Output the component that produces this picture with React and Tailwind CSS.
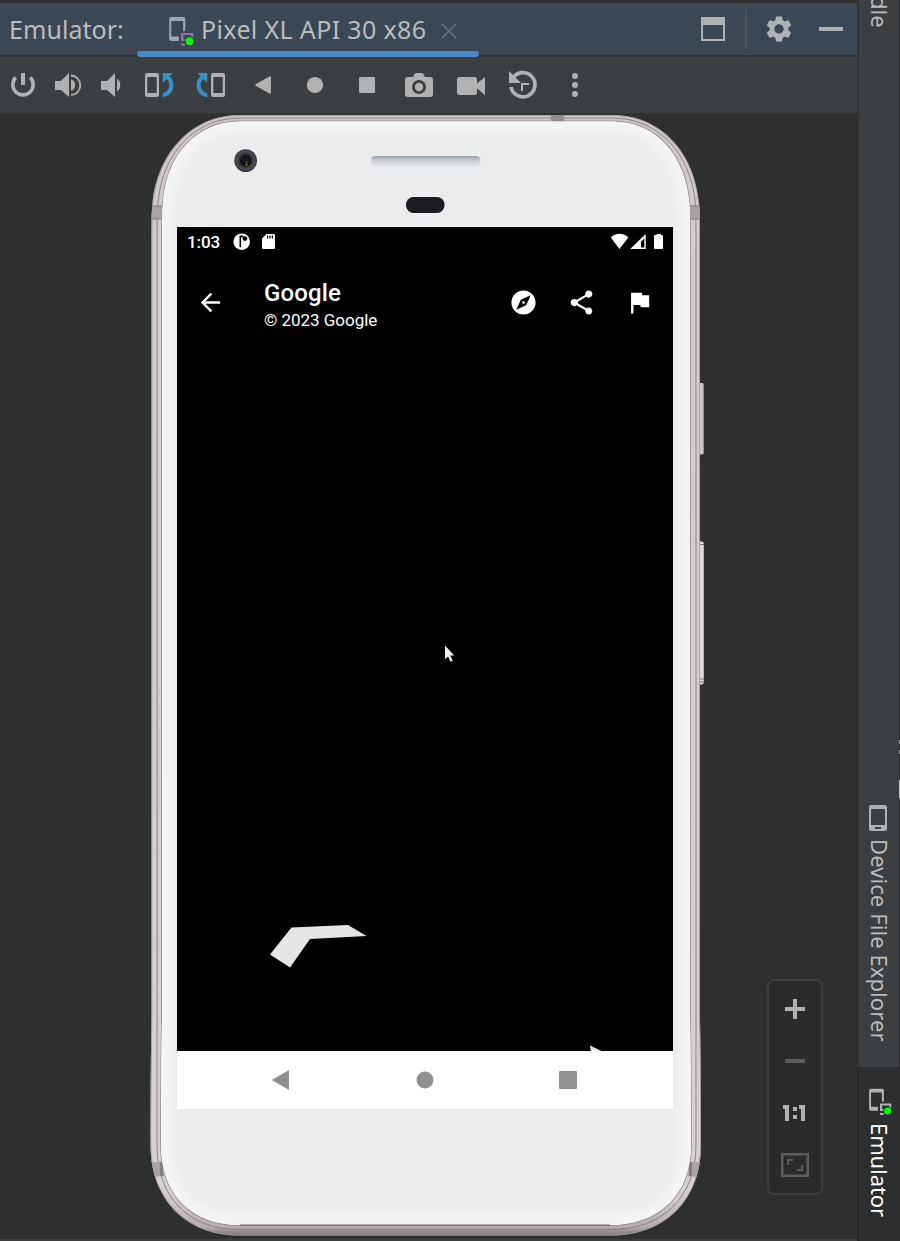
import React from "react";

const BLUE = "#3592c4";

/* An icon whose view box is given in window coordinates. */
function Glyph({ box, children, className = "" }) {
  const [, , w, h] = box.split(" ");
  return (
    <svg viewBox={box} width={w} height={h} className={`block shrink-0 ${className}`}>
      {children}
    </svg>
  );
}

function Material({ d }) {
  return (
    <svg viewBox="0 0 24 24" width="29" height="29" fill="#fff" className="block shrink-0">
      <path d={d} />
    </svg>
  );
}

function EmulatorIcon({ device = "#afb1b3", second = "#afb1b3", scale = 1 }) {
  return (
    <svg viewBox="0 0 28 32" width={28 * scale} height={32 * scale} className="block shrink-0">
      <path
        fillRule="evenodd"
        fill={device}
        d="M3 3h12.500a1.800 1.800 0 0 1 1.800 1.800V17h-2.200V7H3.300v15.500h7.500V27H3a1.800 1.800 0 0 1-1.800-1.800V4.800A1.800 1.800 0 0 1 3 3z"
      />
      <path fill="none" stroke={second} strokeWidth="2.200" d="M14.200 27V20h10v8M13 26h8M13 30.500h4" />
      <circle cx="21.500" cy="27.200" r="5" fill="#26372c" />
      <circle cx="21.500" cy="27.200" r="3.900" fill="#00ff00" />
    </svg>
  );
}

function Header() {
  return (
    <div className="flex h-[52px] shrink-0 bg-[#3c4755] text-[#bbbbbb]">
      <div className="w-[137px] pl-[9px] pt-[6px] text-[25px] leading-[40px] tracking-[0.05px]">Emulator:</div>
      <div className="relative flex w-[342px] pl-[31px]">
        <div className="pt-[11px]">
          <EmulatorIcon device="#9aa7b0" second="#8f73b5" />
        </div>
        <div className="w-[244px] pl-[5px] pt-[6px] text-[25px] leading-[40px] tracking-[0.36px] whitespace-nowrap">
          Pixel XL API 30 x86
        </div>
        <Glyph box="440 3 18 52">
          <path d="M441.500 23.500l15 15M456.500 23.500l-15 15" stroke="#65707c" strokeWidth="1.600" />
        </Glyph>
        <div className="absolute left-0 top-[48px] z-10 h-[6px] w-[342px] rounded-full bg-[#4a88c7]" />
      </div>
      <div className="flex flex-1 justify-end">
        <Glyph box="700 3 26 52">
          <path fillRule="evenodd" fill="#afb1b3" d="M701 17h24v24h-24zM703 25v14h20V25z" />
        </Glyph>
        <div className="ml-[19px] mt-[6px] h-[40px] w-[2px] bg-[#515457]" />
        <Glyph box="747 3 110 52">
          <g fill="#afb1b3">
            <path
              fillRule="evenodd"
              transform="translate(763.400 13.400) scale(1.300)"
              d="M19.140 12.940c.040-.3.060-.61.060-.94s-.020-.64-.070-.94l2.030-1.580a.49.49 0 0 0 .120-.61l-1.920-3.320a.49.49 0 0 0-.59-.22l-2.390.96a7 7 0 0 0-1.620-.94L14.400 2.810a.48.480 0 0 0-.48-.41h-3.840a.47.470 0 0 0-.47.410L9.250 5.350c-.59.240-1.130.57-1.620.94l-2.390-.96a.47.470 0 0 0-.59.220L2.740 8.870a.48.480 0 0 0 .120.610l2.030 1.580c-.050.3-.090.630-.090.940s.020.640.070.940l-2.030 1.580a.49.490 0 0 0-.120.610l1.920 3.320c.120.220.370.290.590.220l2.390-.96c.5.380 1.030.7 1.620.94l.36 2.540c.050.240.240.410.480.410h3.840c.24 0 .44-.17.470-.41l.36-2.540c.59-.24 1.130-.56 1.620-.94l2.390.96c.22.080.470 0 .59-.22l1.920-3.320a.47.470 0 0 0-.12-.61zM12 15.600a3.600 3.600 0 1 1 0-7.200 3.600 3.600 0 0 1 0 7.200z"
            />
            <path d="M819 27h24v4h-24z" />
          </g>
        </Glyph>
      </div>
    </div>
  );
}

function RotateShape() {
  return (
    <g>
      <path
        fillRule="evenodd"
        fill="#afb1b3"
        d="M147 73h10a2 2 0 0 1 2 2v20a2 2 0 0 1-2 2h-10a2 2 0 0 1-2-2V75a2 2 0 0 1 2-2zM147.300 77v16h9.400V77z"
      />
      <path fill={BLUE} d="M162.700 73h10l-3.300 3.300c2.600 2.200 4 5.300 4 8.900 0 6.400-4.300 11.400-10.700 11.800v-4c4-.4 6.600-3.800 6.600-7.800 0-2.400-.9-4.500-2.600-6.100L162.700 83z" />
    </g>
  );
}

function Toolbar() {
  return (
    <div className="flex h-[56px] shrink-0 bg-[#3c3f41] text-[#afb1b3]">
      <Glyph box="0 57 46 56">
        <path d="M15.700 77.600a10.200 10.200 0 1 0 14.600 0" fill="none" stroke="currentColor" strokeWidth="3.600" />
        <path d="M21 73h4v12h-4z" fill="currentColor" />
      </Glyph>
      <Glyph box="46 57 44 56">
        <g fill="currentColor">
          <path d="M55 81h6l8-8v24l-8-7h-6z" />
          <path d="M71 79.500a5 5.700 0 0 1 0 11.200z" />
          <path d="M71 75.500a9.300 9.700 0 0 1 0 19.400" fill="none" stroke="currentColor" strokeWidth="1.800" />
        </g>
      </Glyph>
      <Glyph box="90 57 43 56">
        <g fill="currentColor">
          <path d="M101 81h6l8-8v24l-8-7h-6z" />
          <path d="M117 79a4.300 6.200 0 0 1 0 12z" />
        </g>
      </Glyph>
      <Glyph box="133 57 52 56">
        <RotateShape />
      </Glyph>
      <Glyph box="185 57 52 56">
        <g transform="translate(370 0) scale(-1 1)">
          <RotateShape />
        </g>
      </Glyph>
      <Glyph box="237 57 52 56">
        <path d="M256 85l14.200-8v16z" fill="currentColor" stroke="currentColor" strokeWidth="1.500" strokeLinejoin="round" />
      </Glyph>
      <Glyph box="289 57 52 56">
        <circle cx="315" cy="85" r="8.100" fill="currentColor" />
      </Glyph>
      <Glyph box="341 57 52 56">
        <rect x="359" y="77" width="16" height="16" rx="1.200" fill="currentColor" />
      </Glyph>
      <Glyph box="393 57 52 56">
        <path fill="currentColor" d="M408 77h5l1.600-3a2 2 0 0 1 1.800-1h5.200a2 2 0 0 1 1.800 1l1.600 3h5a3 3 0 0 1 3 3v14a3 3 0 0 1-3 3h-22a3 3 0 0 1-3-3V80a3 3 0 0 1 3-3z" />
        <circle cx="419" cy="87" r="5.600" fill="none" stroke="#3c3f41" strokeWidth="2.800" />
      </Glyph>
      <Glyph box="445 57 52 56">
        <path fill="currentColor" d="M459.500 77h15a2.500 2.500 0 0 1 2.500 2.500v4L485 77v18l-8-6.500v4a2.500 2.500 0 0 1-2.500 2.500h-15a2.500 2.500 0 0 1-2.500-2.500v-13a2.500 2.500 0 0 1 2.500-2.500z" />
      </Glyph>
      <Glyph box="497 57 52 56">
        <path d="M511 87a12.100 12.100 0 1 0 2.600-10" fill="none" stroke="currentColor" strokeWidth="3.700" />
        <path d="M509 71v12h12z" fill="currentColor" />
        <path d="M522 91v-7h7" fill="none" stroke="currentColor" strokeWidth="2" />
      </Glyph>
      <Glyph box="549 57 52 56">
        <g fill="currentColor">
          <circle cx="575" cy="76" r="3" />
          <circle cx="575" cy="85" r="3" />
          <circle cx="575" cy="94" r="3" />
        </g>
      </Glyph>
    </div>
  );
}

const SHELL =
  "M240 115H612C661 115 694 152 699 203C700 213 700 223 700 240V1020C701 1070 701 1110 701 1145C701 1200 665 1235.500 612 1235.500H238C187 1235.500 150.500 1200 150.500 1145C150.500 1110 150.500 1070 151.500 1020V240C151.500 223 151.500 213 152.500 203C158 152 192 115 240 115Z";
const FACE =
  "M240 121.500H612C657 121.500 686 156 689.500 205C690 220 690 240 690 260V1020C691 1070 691 1110 691 1145C691 1195 659 1225 610 1225H240C192 1225 161 1195 161 1145C161 1110 161 1070 162 1020V240C162 223 162 214 163 203C166 156 196 121.500 240 121.500Z";
const GROOVE =
  "M240 118H612C659 118 691 154 695.500 204C696 220 696 240 696 260V1020C696 1070 696 1110 696 1145C696 1198 662 1229.500 611 1229.500H239C189 1229.500 157 1198 157 1145C157 1110 157 1070 157 1020V240C157 223 157 214 158 203C162 154 194 118 240 118Z";

function DeviceShell() {
  return (
    <svg viewBox="140 115 580 1123" width="580" height="1123" className="absolute left-[140px] top-0">
      <defs>
        <clipPath id="shellClip">
          <path d={SHELL} />
        </clipPath>
        <clipPath id="faceClip">
          <path d={FACE} />
        </clipPath>
        <filter id="soft" x="-10%" y="-10%" width="120%" height="120%">
          <feGaussianBlur stdDeviation="4" />
        </filter>
        <linearGradient id="rim" x1="0" y1="0" x2="0" y2="1">
          <stop offset="0" stopColor="#cdc5c8" />
          <stop offset="0.1" stopColor="#d3cccf" />
          <stop offset="0.96" stopColor="#d8d1d4" />
          <stop offset="0.992" stopColor="#b7adb1" />
          <stop offset="1" stopColor="#7d7478" />
        </linearGradient>
        <linearGradient id="speaker" x1="0" y1="0" x2="0" y2="1">
          <stop offset="0" stopColor="#9aa0aa" />
          <stop offset="0.3" stopColor="#bcc2c9" />
          <stop offset="0.5" stopColor="#d3d7db" />
          <stop offset="0.85" stopColor="#dee0e3" />
          <stop offset="1" stopColor="#e6e7e9" />
        </linearGradient>
        <radialGradient id="lens">
          <stop offset="0" stopColor="#0a0a0c" />
          <stop offset="0.45" stopColor="#141518" />
          <stop offset="0.6" stopColor="#3c3d40" />
          <stop offset="0.85" stopColor="#4a4b4e" />
          <stop offset="1" stopColor="#2c2d2f" />
        </radialGradient>
      </defs>

      <rect x="698" y="383" width="5.800" height="71.500" rx="2" fill="#c9cac9" />
      <path d="M703.300 385v68" stroke="#777b7a" strokeWidth="1.200" strokeDasharray="1 1" />
      <rect x="698" y="541.500" width="5.800" height="143" rx="2" fill="#d9ddd8" />
      <path d="M699 544.500h5M699 679h5M699 682h5" stroke="#777777" strokeWidth="1" />
      <path d="M703.500 546v132" stroke="#b5b9b4" strokeWidth="0.800" />

      <path d={SHELL} fill="url(#rim)" />
      <g clipPath="url(#shellClip)">
        <path d={SHELL} fill="none" stroke="#9f979b" strokeWidth="1.600" />
        <path d={GROOVE} fill="none" stroke="#8b8287" strokeWidth="1" />
        <path d={FACE} fill="none" stroke="#9b9297" strokeWidth="1.800" />
        <path d="M551 115h13v7h-13z" fill="#938b8f" />
        <path d="M150 206h12v13h-12zM690 206h12v13h-12z" fill="#aaa2a6" />
        <path d="M152 206h10M152 219h10M690 206h10M690 219h10" stroke="#827b7f" strokeWidth="1" />
        <path d="M150 1162h14v14.500h-14zM688 1162h14v14.500h-14z" fill="#aaa2a6" />
        <path d="M160 1162h3v14h-3zM689 1162h3v14h-3z" fill="#827b7f" />
      </g>
      <path d={FACE} fill="#ebecee" />
      <g clipPath="url(#faceClip)">
        <path d={FACE} fill="none" stroke="#f4f4f7" strokeWidth="20" filter="url(#soft)" />
      </g>
      <path d="M240 1225H610" stroke="#665d62" strokeWidth="1" />

      <circle cx="245.700" cy="160.600" r="11.400" fill="url(#lens)" />
      <circle cx="245.500" cy="159" r="3.500" fill="#17192a" />
      <circle cx="246.500" cy="162.500" r="1" fill="#77762c" />
      <circle cx="246.500" cy="165" r="1" fill="#8a8730" />
      <rect x="371" y="156" width="109.500" height="11" rx="4.500" fill="url(#speaker)" />
      <path d="M374 161.500h104M374 163.500h104" stroke="#c6cbd0" strokeWidth="0.800" strokeDasharray="1 1" />
      <rect x="406" y="197" width="38.500" height="16" rx="7.500" fill="#1b1d22" />
    </svg>
  );
}

function StatusBar() {
  return (
    <div className="flex h-[30px] items-center pl-[10px]">
      <div className="w-[46px] text-[17px] font-medium leading-[30px] tracking-[-0.1px]">1:03</div>
      <Glyph box="233 227 60 30">
        <circle cx="241.700" cy="241.700" r="8.300" fill="#fff" />
        <path d="M240.300 236v11.200M240.300 236.400h3" stroke="#000" strokeWidth="1.600" fill="none" />
        <circle cx="244.900" cy="238.600" r="2.400" fill="#000" />
        <path fill="#fff" d="M266.500 234h7.200a1.300 1.300 0 0 1 1.300 1.300v12.400a1.300 1.300 0 0 1-1.300 1.300h-10.400a1.300 1.300 0 0 1-1.300-1.300v-9.200z" />
        <path d="M267.600 235.500v3M270 235.500v3M272.400 235.500v3" stroke="#000" strokeWidth="1.200" />
      </Glyph>
      <Glyph box="609 227 64 30" className="ml-auto">
        <g fill="#fff">
          <path d="M610.800 237.400c5-5 12.500-5 17.500 0L619.500 249z" />
          <path fillRule="evenodd" d="M645.700 234v15h-15.500zM644.300 238.500l-3.300 3.300v5.800h3.300z" />
          <path d="M656.500 234h4.500v1h1a1 1 0 0 1 1 1v12a1 1 0 0 1-1 1h-7a1 1 0 0 1-1-1v-12a1 1 0 0 1 1-1h1.500z" />
        </g>
      </Glyph>
    </div>
  );
}

function StreetScreen() {
  return (
    <div className="flex h-[824px] w-[496px] flex-col bg-black text-white font-['Roboto',sans-serif]">
      <StatusBar />
      <div className="flex h-[90px] items-center pl-[19px] pr-[19px]">
        <Material d="M20 11H7.830l5.590-5.590L12 4l-8 8 8 8 1.410-1.410L7.830 13H20v-2z" />
        <div className="ml-[39px] pt-[7px]">
          <div className="text-[24px] font-medium leading-[28px] tracking-[0.15px]">Google</div>
          <div className="text-[17px] leading-[26px] tracking-[-0.03px]">© 2023 Google</div>
        </div>
        <div className="ml-auto flex gap-[29px]">
          <Material d="M12 10.900c-.61 0-1.100.49-1.100 1.100s.49 1.100 1.100 1.100c.61 0 1.100-.49 1.100-1.100s-.49-1.100-1.100-1.100zM12 2C6.480 2 2 6.480 2 12s4.480 10 10 10 10-4.480 10-10S17.520 2 12 2zm2.190 12.190L6 18l3.810-8.190L18 6l-3.810 8.190z" />
          <Material d="M18 16.080c-.76 0-1.440.3-1.960.77L8.910 12.700c.05-.23.09-.46.09-.7s-.04-.47-.09-.7l7.050-4.110c.54.5 1.250.81 2.040.81 1.660 0 3-1.340 3-3s-1.340-3-3-3-3 1.340-3 3c0 .24.04.47.09.7L8.040 9.810C7.500 9.310 6.790 9 6 9c-1.660 0-3 1.340-3 3s1.340 3 3 3c.79 0 1.500-.31 2.040-.81l7.120 4.160c-.05.21-.08.43-.08.65 0 1.610 1.310 2.920 2.920 2.920 1.610 0 2.920-1.310 2.920-2.920s-1.310-2.920-2.920-2.920z" />
          <Material d="M14.400 6L14 4H5v17h2v-7h5.600l.4 2h7V6z" />
        </div>
      </div>
      <svg viewBox="177 347 496 704" width="496" height="704" className="block">
        <path fill="#e6e6e6" d="M270 954.500L291.500 927.500L348 925L366.500 936L310 939L290 967.500Z" />
        <path fill="#e6e6e6" d="M590 1045.500L601.500 1051H590.800Z" />
        <path fill="#f2f2f2" d="M445 645.500l9.300 10h-4l2.300 5.200-2.200 1-2.300-5.300-3.100 2.900z" />
      </svg>
    </div>
  );
}

function NavBar() {
  return (
    <div className="flex h-[58px] w-[496px] bg-white">
      <Glyph box="177 1051 496 58">
        <g fill="#909090">
          <path d="M271.800 1080l17.200-10v20z" />
          <circle cx="425" cy="1080" r="8.500" />
          <rect x="559" y="1071" width="18" height="18" rx="1" />
        </g>
      </Glyph>
    </div>
  );
}

function ZoomPanel() {
  return (
    <div className="absolute left-[767px] top-[864px] flex h-[216px] w-[56px] flex-col items-center rounded-[7px] border-2 border-[#3d3e3f] bg-[#2b2b2b] pt-[2px]">
      <Glyph box="769 983 52 52">
        <path fill="#afb1b3" d="M793 999h4v8h8v4h-8v8h-4v-8h-8v-4h8z" />
      </Glyph>
      <Glyph box="769 1035 52 52">
        <path fill="#5b5c5d" d="M785 1059h20v4h-20z" />
      </Glyph>
      <Glyph box="769 1087 52 52">
        <path fill="#afb1b3" d="M783 1105h6v16h-4v-12h-2zM799 1105h6v16h-4v-12h-2zM793 1107h4v4h-4zM793 1115h4v4h-4z" />
      </Glyph>
      <Glyph box="769 1139 52 52">
        <path fillRule="evenodd" fill="#5b5c5d" d="M781 1153h28v24h-28zM783.500 1155.500v19h23v-19z" />
        <path d="M788 1165v-5h5M802 1165v5h-5" fill="none" stroke="#5b5c5d" strokeWidth="2" />
      </Glyph>
    </div>
  );
}

function SideBar() {
  return (
    <div className="relative flex h-[1241px] w-[43px] shrink-0 flex-col overflow-hidden bg-[#323232]">
      <div className="flex h-[1067px] shrink-0 border-r border-[#2b2b2b] ml-[2px] flex-col items-center bg-[#3c3f41] text-[#bbbbbb]">
        <div className="flex h-[28px] w-[40px] items-end justify-center pl-[2px]">
          <div className="text-[22px] leading-[40px] tracking-[0px] [writing-mode:vertical-rl]">dle</div>
        </div>
        <Glyph box="859 800 40 34" className="mt-[772px]">
          <path
            fillRule="evenodd"
            fill="#afb1b3"
            d="M871 805h14a2 2 0 0 1 2 2v22a2 2 0 0 1-2 2h-14a2 2 0 0 1-2-2v-22a2 2 0 0 1 2-2zM871 809v16h14v-16zM875 827v2h6v-2z"
          />
        </Glyph>
        <div className="ml-[2px] mt-[5px] text-[22px] leading-[40px] tracking-[0.08px] whitespace-nowrap [writing-mode:vertical-rl]">
          Device File Explorer
        </div>
      </div>
      <div className="flex h-[174px] shrink-0 flex-col border-l-2 border-[#252627] bg-[#2c2e30] text-white">
        <div className="ml-[9px] mt-[19px] h-[32px]">
          <EmulatorIcon scale={0.92} />
        </div>
        <div className="ml-px mt-[5px] text-[22px] leading-[40px] tracking-[-0.1px] [writing-mode:vertical-rl]">
          Emulator
        </div>
      </div>
      <div className="absolute left-[42px] top-[740px] h-[14px] w-px border-y-4 border-[#999999]" />
      <div className="absolute left-[42px] top-[780px] h-[18px] w-px bg-[#cccccc]" />
    </div>
  );
}

export default function App() {
  return (
    <div className="flex h-[1241px] w-[900px] overflow-hidden bg-[#323232] font-['Noto_Sans',sans-serif]">
      <div className="flex w-[857px] shrink-0 flex-col pt-[3px]">
        <Header />
        <div className="h-[2px] shrink-0" />
        <Toolbar />
        <div className="h-[2px] shrink-0" />
        <div className="relative h-[1123px] shrink-0 bg-[#2d2f31]">
          <DeviceShell />
          <div className="relative ml-[177px] pt-[112px]">
            <StreetScreen />
            <NavBar />
          </div>
          <ZoomPanel />
        </div>
        <div className="h-px shrink-0" />
        <div className="h-[2px] shrink-0 bg-[#3c3f41]" />
      </div>
      <SideBar />
    </div>
  );
}
